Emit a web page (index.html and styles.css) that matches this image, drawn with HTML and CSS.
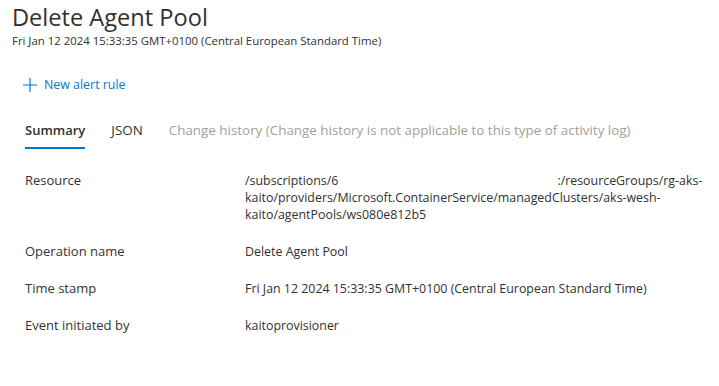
FILE: index.html
```html
<!DOCTYPE html>
<html lang="en">
<head>
  <meta charset="UTF-8" />
  <title>Delete Agent Pool</title>
  <link rel="stylesheet" href="styles.css">
</head>
<body>
  <div class="page">
    <header class="head">
      <h1>Delete Agent Pool</h1>
      <div class="sub">Fri Jan 12 2024 15:33:35 GMT+0100 (Central European Standard Time)</div>
    </header>

    <div class="toolbar">
      <button class="cmd">
        <svg width="16" height="16" viewBox="0 0 16 16"><path d="M8 1v14M1 8h14" stroke="#0078d4" stroke-width="1.2" fill="none"/></svg>
        <span>New alert rule</span>
      </button>
    </div>

    <nav class="tabs">
      <span class="tab active">Summary</span>
      <span class="tab">JSON</span>
      <span class="tab disabled">Change history (Change history is not applicable to this type of activity log)</span>
    </nav>

    <div class="props">
      <div class="row">
        <div class="label">Resource</div>
        <div class="value">
          <span class="line">/subscriptions/6<span class="redact"></span>:/resourceGroups/rg-aks-</span>
          <span class="line">kaito/providers/Microsoft.ContainerService/managedClusters/aks-wesh-</span>
          <span class="line">kaito/agentPools/ws080e812b5</span>
        </div>
      </div>
      <div class="row">
        <div class="label">Operation name</div>
        <div class="value">Delete Agent Pool</div>
      </div>
      <div class="row">
        <div class="label">Time stamp</div>
        <div class="value">Fri Jan 12 2024 15:33:35 GMT+0100 (Central European Standard Time)</div>
      </div>
      <div class="row">
        <div class="label">Event initiated by</div>
        <div class="value">kaitoprovisioner</div>
      </div>
    </div>
  </div>
</body>
</html>
```

FILE: styles.css
```css
* { box-sizing: border-box; }
body {
  margin: 0;
  font-family: "Open Sans", Arial, sans-serif;
  background: #fff;
  color: #323130;
}
.page {
  padding: 0 12px;
}
.head h1 {
  margin: 0;
  padding-top: 1px;
  font-size: 23.6px;
  font-weight: 400;
  line-height: 32px;
}
.sub {
  font-size: 11.4px;
  line-height: 15px;
}
.toolbar {
  margin-top: 28px;
  padding-left: 10px;
}
.cmd {
  display: flex;
  align-items: center;
  gap: 6px;
  border: none;
  background: none;
  padding: 0;
  font: inherit;
  font-size: 12.4px;
  color: #0078d4;
}
.tabs {
  display: flex;
  gap: 26px;
  margin-top: 28px;
  padding-left: 13px;
}
.tab {
  font-size: 13.4px;
  line-height: 18px;
  padding-bottom: 8px;
  border-bottom: 2px solid transparent;
}
.tab.active {
  font-size: 13px;
  font-weight: 600;
  border-bottom-color: #0078d4;
}
.tab.disabled {
  color: #a19f9d;
}
.props {
  margin-top: 13px;
  padding-left: 13px;
}
.row {
  display: flex;
  padding: 10px 0;
  font-size: 12.4px;
  line-height: 17px;
}
.label {
  width: 219px;
  flex: none;
  font-size: 13px;
}
.value {
  flex: 1;
  padding-left: 1px;
}
.line {
  display: block;
  white-space: nowrap;
}
.redact {
  display: inline-block;
  width: 219px;
  height: 14px;
  vertical-align: middle;
  background: #fff;
}
```
